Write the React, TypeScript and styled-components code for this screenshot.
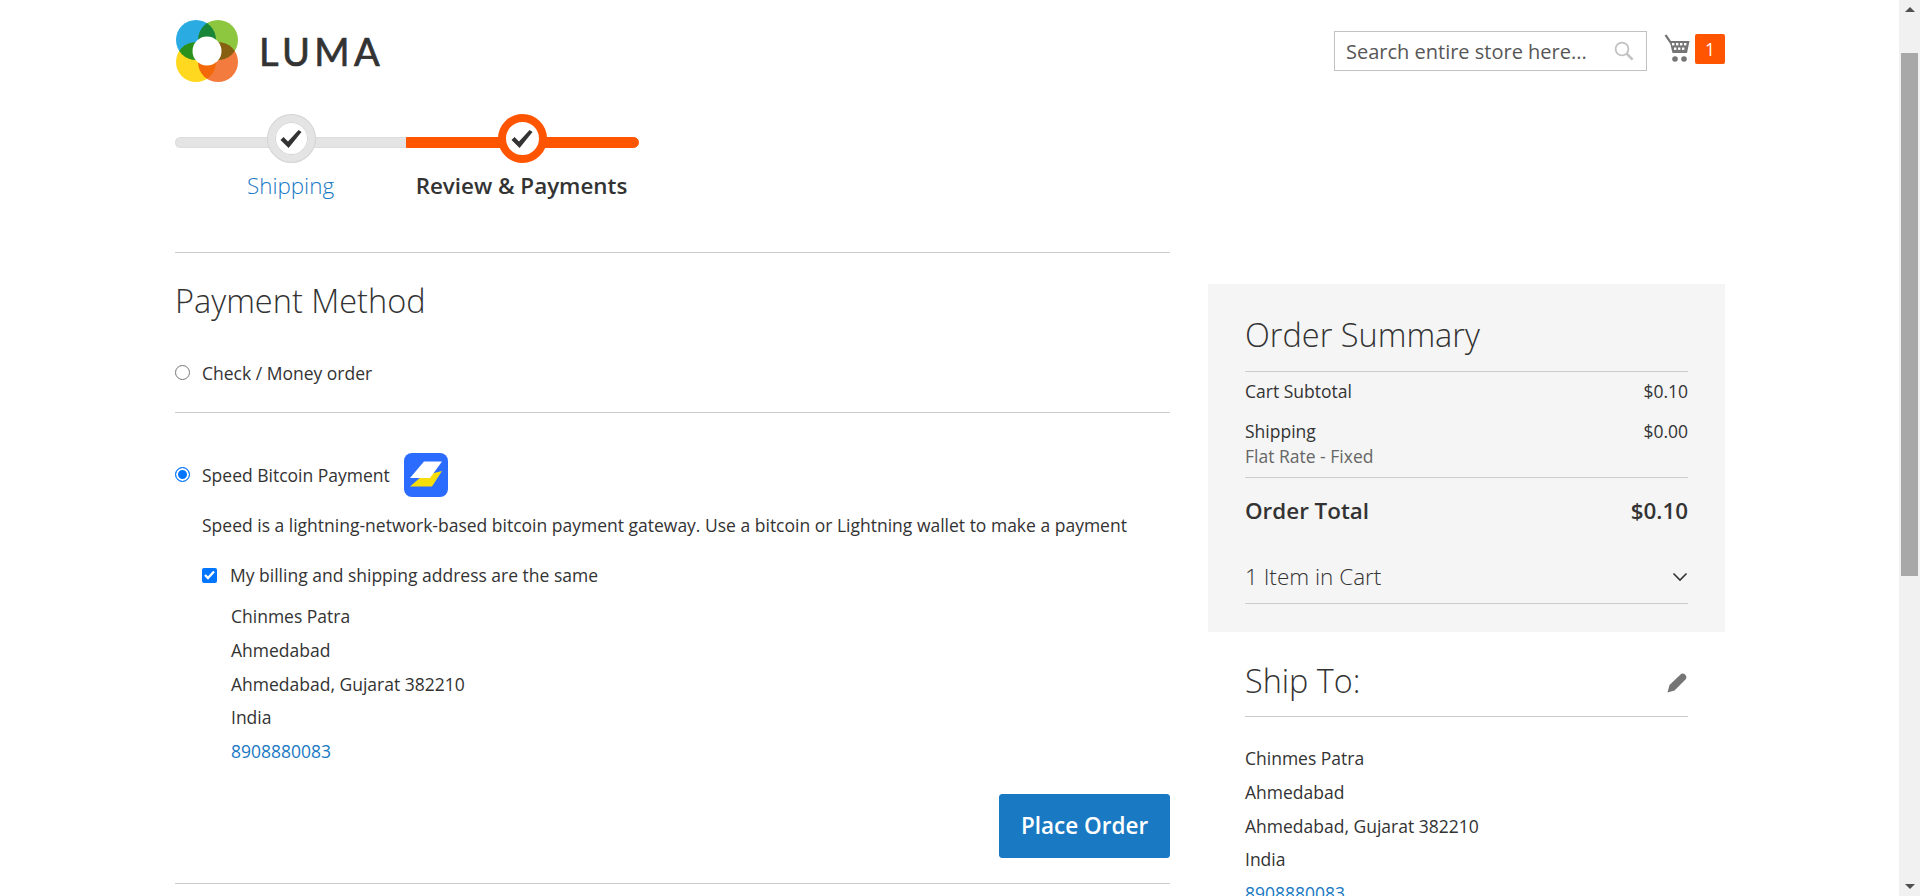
import React from 'react';
import styled, { createGlobalStyle } from 'styled-components';

const GlobalStyles = createGlobalStyle`
	html, body {
		margin: 0;
		height: 896px;
		overflow: hidden;
		background: #fff;
	}
	body {
		font-family: "Open Sans", "Liberation Sans", sans-serif;
		font-size: 17.5px;
		color: #333;
	}
	* {
		box-sizing: border-box;
	}
`;

const Shell = styled.div`
	display: flex;
	height: 896px;
	overflow: hidden;
`;

const Page = styled.div`
	flex: 1;
	min-width: 0;
	padding: 0 174px 0 175px;
`;

const ScrollTrack = styled.div`
	flex: 0 0 21px;
	display: flex;
	flex-direction: column;
	align-items: center;
	background: #f1f1f1;
	padding-top: 7px;
`;

const ScrollArrow = styled.div<{ $down?: boolean }>`
	width: 0;
	height: 0;
	border-left: 5px solid transparent;
	border-right: 5px solid transparent;
	${(props) => props.$down ? 'border-top: 5px solid #505050;' : 'border-bottom: 5px solid #505050;'}
`;

const ScrollThumb = styled.div`
	width: 17px;
	height: 523px;
	margin-top: 41px;
	margin-bottom: auto;
	background: #a8a8a8;
`;

const ScrollBottom = styled.div`
	height: 7px;
`;

const Header = styled.header`
	display: flex;
	justify-content: space-between;
	height: 114px;
	padding-top: 19px;
`;

const Logo = styled.a`
	display: flex;
	align-items: center;
	height: 64px;
	gap: 20px;
`;

const LogoText = styled.span`
	font-family: Lato, "Open Sans", sans-serif;
	font-size: 38px;
	font-weight: 400;
	letter-spacing: 4.4px;
	-webkit-text-stroke: 0.7px #333;
	color: #333;
`;

const HeaderTools = styled.div`
	display: flex;
	align-items: flex-start;
	padding-top: 12px;
`;

const SearchBox = styled.div`
	display: flex;
	align-items: center;
	justify-content: space-between;
	width: 313px;
	height: 40px;
	padding: 0 12px 0 11px;
	border: 1px solid #c2c2c2;
	font-size: 20px;
	color: #575757;
`;

const Cart = styled.div`
	display: flex;
	align-items: flex-start;
	margin-left: 17px;
	padding-top: 3px;
`;

const Counter = styled.span`
	display: flex;
	align-items: center;
	justify-content: center;
	width: 30px;
	height: 30px;
	margin-left: 5px;
	border-radius: 2px;
	background: #ff5501;
	color: #fff;
	font-size: 17.5px;
`;

const Steps = styled.ul`
	display: flex;
	width: 464px;
	height: 138px;
	margin: 0;
	padding: 0;
	list-style: none;
`;

const Step = styled.li<{ $active?: boolean }>`
	position: relative;
	flex: 0 0 ${(props) => props.$active ? 233 : 231}px;
	padding-top: 23px;
	padding-right: ${(props) => props.$active ? 2 : 0}px;
	text-align: center;
	font-size: 22.4px;
	font-weight: ${(props) => props.$active ? 600 : 300};
	color: ${(props) => props.$active ? '#333' : '#1979c3'};
	white-space: nowrap;
`;

const StepBar = styled.div<{ $active?: boolean }>`
	height: 11px;
	margin-bottom: 22px;
	margin-right: ${(props) => props.$active ? -2 : 0}px;
	background: ${(props) => props.$active ? '#ff5501' : '#e4e4e4'};
	border: 1px solid ${(props) => props.$active ? '#ff5501' : '#ddd'};
	border-right-width: ${(props) => props.$active ? 1 : 0}px;
	border-radius: ${(props) => props.$active ? '0 6px 6px 0' : '6px 0 0 6px'};
`;

const StepCircle = styled.span<{ $active?: boolean }>`
	position: absolute;
	top: ${(props) => props.$active ? 0 : 1}px;
	left: 50%;
	display: flex;
	align-items: center;
	justify-content: center;
	width: ${(props) => props.$active ? 49 : 47}px;
	height: ${(props) => props.$active ? 49 : 47}px;
	margin-left: ${(props) => props.$active ? -25 : -23}px;
	background: #fff;
	border-radius: 50%;
	border: ${(props) => props.$active ? '8px solid #ff5501' : '7px solid #e4e4e4'};
	box-shadow: ${(props) => props.$active ? 'none' : 'inset 0 0 0 1px #d4d4d4, 0 0 0 1px #d4d4d4'};
`;

const Columns = styled.div`
	display: grid;
	grid-template-columns: 995px 517px;
	column-gap: 38px;
	align-items: start;
`;

const Main = styled.main`
	border-top: 1px solid #ccc;
`;

const SectionTitle = styled.h1`
	margin: 0;
	padding-top: 26px;
	font-size: 32.5px;
	font-weight: 300;
	line-height: 44px;
`;

const MethodRow = styled.label<{ $open?: boolean }>`
	display: flex;
	align-items: center;
	gap: 12px;
	height: ${(props) => props.$open ? 44 : 38}px;
`;

const RadioDot = styled.span<{ $checked?: boolean }>`
	flex: none;
	width: 15px;
	height: 15px;
	margin-top: -2px;
	border-radius: 50%;
	background: ${(props) => props.$checked ? '#0075ff' : '#fff'};
	border: ${(props) => props.$checked ? '1px solid #0075ff' : '1px solid #767676'};
	box-shadow: ${(props) => props.$checked ? 'inset 0 0 0 2px #fff' : 'none'};
`;

const Method = styled.div<{ $open?: boolean }>`
	padding-top: ${(props) => props.$open ? 40 : 31}px;
	padding-bottom: ${(props) => props.$open ? 25 : 20}px;
	border-bottom: 1px solid #ccc;
`;

const MethodBody = styled.div`
	padding-left: 27px;
`;

const MethodNote = styled.p`
	margin: 11px 0 0;
	line-height: 34px;
`;

const SameAddress = styled.label`
	display: flex;
	align-items: center;
	gap: 13px;
	margin-top: 16px;
	height: 34px;
`;

const CheckBox = styled.span`
	display: flex;
	align-items: center;
	justify-content: center;
	width: 15px;
	height: 15px;
	border-radius: 2px;
	background: #0075ff;
`;

const BillingAddress = styled.address`
	margin: 8px 0 0 29px;
	font-style: normal;
	line-height: 33.75px;
`;

const AddressLine = styled.div``;

const PhoneLink = styled.a`
	color: #1979c3;
`;

const Actions = styled.div`
	display: flex;
	justify-content: flex-end;
	margin-top: 25px;
`;

const PlaceOrder = styled.button`
	width: 171px;
	height: 64px;
	border: 1px solid #1979c3;
	border-radius: 3px;
	background: #1979c3;
	color: #fff;
	font-family: inherit;
	font-size: 22.5px;
	font-weight: 600;
`;

const Aside = styled.aside`
	padding-top: 32px;
`;

const Summary = styled.section`
	height: 348px;
	padding: 0 37px 0 37px;
	background: #f5f5f5;
`;

const SummaryTitle = styled.h2`
	margin: 0;
	padding: 28px 0 14px;
	border-bottom: 1px solid #ccc;
	font-size: 32.5px;
	font-weight: 300;
	line-height: 45px;
`;

const TotalsRow = styled.div<{ $pad?: number }>`
	display: flex;
	justify-content: space-between;
	line-height: 24px;
	padding-top: ${(props) => props.$pad ?? 0}px;
`;

const MethodNameText = styled.div`
	line-height: 26px;
	color: #666;
	padding-bottom: 8px;
	border-bottom: 1px solid #ccc;
`;

const GrandRow = styled.div`
	display: flex;
	justify-content: space-between;
	padding-top: 17px;
	font-size: 22.4px;
	font-weight: 600;
	line-height: 31px;
`;

const ItemsRow = styled.div`
	display: flex;
	align-items: center;
	justify-content: space-between;
	margin-top: 29px;
	height: 49px;
	padding-bottom: 5px;
	border-bottom: 1px solid #ccc;
	font-size: 22.5px;
	font-weight: 300;
`;

const ShipTo = styled.section`
	padding: 0 37px;
`;

const ShipHeader = styled.div`
	display: flex;
	align-items: center;
	justify-content: space-between;
	height: 85px;
	padding-top: 12px;
	border-bottom: 1px solid #ccc;
	font-size: 32.4px;
	font-weight: 300;
`;

const ShipAddress = styled.address`
	margin-top: 25px;
	font-style: normal;
	line-height: 33.75px;
`;

function LumaMark() {
	return (
		<svg width="64" height="64" viewBox="0 0 64 64" style={{ isolation: 'isolate' }}>
			<g>
				<circle cx="21" cy="21" r="20" fill="#2aabe2" style={{ mixBlendMode: 'multiply' }} />
				<circle cx="43" cy="21" r="20" fill="#8dc63f" style={{ mixBlendMode: 'multiply' }} />
				<circle cx="21" cy="43" r="20" fill="#ffd81f" style={{ mixBlendMode: 'multiply' }} />
				<circle cx="43" cy="43" r="20" fill="#f37b3d" style={{ mixBlendMode: 'multiply' }} />
				<circle cx="32" cy="32" r="14.5" fill="#fff" />
			</g>
		</svg>
	);
}

function CheckMark() {
	return (
		<svg width="22" height="20" viewBox="0 0 22 20">
			<path d="M0.5 11 L3.5 8 L8 12.4 L18.6 1 L21.5 3 L8.6 19 Z" fill="#333" />
		</svg>
	);
}

function SearchIcon() {
	return (
		<svg width="20" height="20" viewBox="0 0 20 20" fill="none" stroke="#c2c2c2">
			<circle cx="8" cy="8" r="6.4" strokeWidth="1.8" />
			<path d="M12.6 12.6 L18.6 18.6" strokeWidth="2.6" />
		</svg>
	);
}

function CartIcon() {
	return (
		<svg width="26" height="30" viewBox="0 0 26 30">
			<path d="M0.5 1.5 L2.5 0.5 L7 7 L25.5 7 L23 19 L8.5 19 L6.3 10 Z" fill="#757575" />
			<g fill="#fff">
				<rect x="8" y="9" width="2.4" height="2.4" />
				<rect x="12" y="9" width="2.4" height="2.4" />
				<rect x="16" y="9" width="2.4" height="2.4" />
				<rect x="20" y="9" width="2.4" height="2.4" />
				<rect x="10" y="13.5" width="2.4" height="2.4" />
				<rect x="14" y="13.5" width="2.4" height="2.4" />
				<rect x="18" y="13.5" width="2.4" height="2.4" />
			</g>
			<circle cx="11" cy="25" r="2.8" fill="#757575" />
			<circle cx="20" cy="25" r="2.8" fill="#757575" />
		</svg>
	);
}

function SpeedIcon() {
	return (
		<svg width="44" height="44" viewBox="0 0 44 44" style={{ marginLeft: 2 }}>
			<rect width="44" height="44" rx="8" fill="#2b6cff" />
			<path d="M6 33.5 L18 23 L38 18 L28 33.5 Z" fill="#f7dd0a" />
			<path d="M6 25 L20 8.5 L38 8.5 L26 25 Z" fill="#fff" />
		</svg>
	);
}

function TinyCheck() {
	return (
		<svg width="11" height="10" viewBox="0 0 11 10" fill="none" stroke="#fff" strokeWidth="2.4">
			<path d="M1 5 L4 8 L10 1.5" />
		</svg>
	);
}

function Chevron() {
	return (
		<svg width="16" height="10" viewBox="0 0 16 10" fill="none" stroke="#333" strokeWidth="1.6">
			<path d="M1.5 1.5 L8 8 L14.5 1.5" />
		</svg>
	);
}

function Pencil() {
	return (
		<svg width="20" height="20" viewBox="0 0 20 20" style={{ marginRight: 1, marginTop: 5 }}>
			<path d="M0.5 19.5 L2.5 12 L13.5 1.5 L14.5 0.8 Q16 0 17.5 1 Q20 3 19.3 5 L18.5 6.5 L7.5 17.5 Z" fill="#757575" />
		</svg>
	);
}

const addressLines = ['Chinmes Patra', 'Ahmedabad', 'Ahmedabad, Gujarat 382210', 'India'];

export default function App() {
	return (
		<>
			<GlobalStyles />
			<Shell>
				<Page>
					<Header>
						<Logo>
							<LumaMark />
							<LogoText>LUMA</LogoText>
						</Logo>
						<HeaderTools>
							<SearchBox>
								<span>Search entire store here...</span>
								<SearchIcon />
							</SearchBox>
							<Cart>
								<CartIcon />
								<Counter>1</Counter>
							</Cart>
						</HeaderTools>
					</Header>

					<Steps>
						<Step>
							<StepBar />
							<StepCircle><CheckMark /></StepCircle>
							Shipping
						</Step>
						<Step $active>
							<StepBar $active />
							<StepCircle $active><CheckMark /></StepCircle>
							Review &amp; Payments
						</Step>
					</Steps>

					<Columns>
						<Main>
							<SectionTitle>Payment Method</SectionTitle>
							<Method>
								<MethodRow>
									<RadioDot />
									Check / Money order
								</MethodRow>
							</Method>
							<Method $open>
								<MethodRow $open>
									<RadioDot $checked />
									Speed Bitcoin Payment
									<SpeedIcon />
								</MethodRow>
								<MethodBody>
									<MethodNote>Speed is a lightning-network-based bitcoin payment gateway. Use a bitcoin or Lightning wallet to make a payment</MethodNote>
									<SameAddress>
										<CheckBox><TinyCheck /></CheckBox>
										My billing and shipping address are the same
									</SameAddress>
									<BillingAddress>
										{addressLines.map((line) => <AddressLine key={line}>{line}</AddressLine>)}
										<PhoneLink>8908880083</PhoneLink>
									</BillingAddress>
								</MethodBody>
								<Actions>
									<PlaceOrder>Place Order</PlaceOrder>
								</Actions>
							</Method>
						</Main>

						<Aside>
							<Summary>
								<SummaryTitle>Order Summary</SummaryTitle>
								<TotalsRow $pad={7}>
									<span>Cart Subtotal</span>
									<span>$0.10</span>
								</TotalsRow>
								<TotalsRow $pad={16}>
									<span>Shipping</span>
									<span>$0.00</span>
								</TotalsRow>
								<MethodNameText>Flat Rate - Fixed</MethodNameText>
								<GrandRow>
									<span>Order Total</span>
									<span>$0.10</span>
								</GrandRow>
								<ItemsRow>
									<span>1 Item in Cart</span>
									<Chevron />
								</ItemsRow>
							</Summary>
							<ShipTo>
								<ShipHeader>
									<span>Ship To:</span>
									<Pencil />
								</ShipHeader>
								<ShipAddress>
									{addressLines.map((line) => <AddressLine key={line}>{line}</AddressLine>)}
									<PhoneLink>8908880083</PhoneLink>
								</ShipAddress>
							</ShipTo>
						</Aside>
					</Columns>
				</Page>
				<ScrollTrack>
					<ScrollArrow />
					<ScrollThumb />
					<ScrollArrow $down />
					<ScrollBottom />
				</ScrollTrack>
			</Shell>
		</>
	);
}
